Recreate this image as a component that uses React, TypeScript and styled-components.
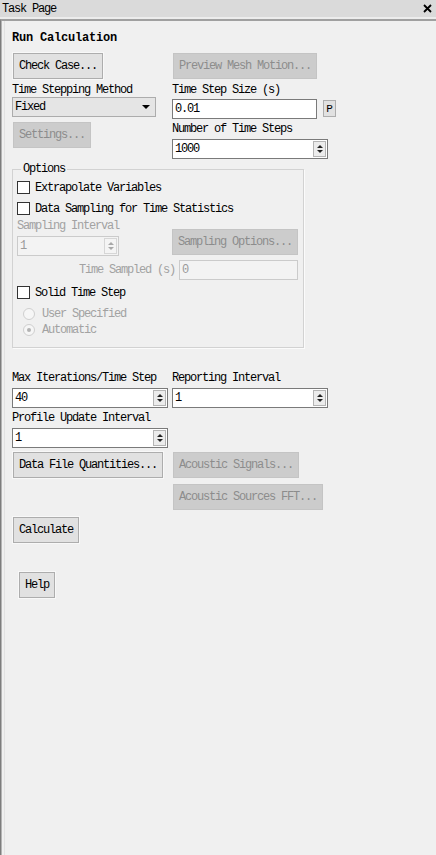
import React from 'react';
import styled, { createGlobalStyle } from 'styled-components';

const GlobalStyle = createGlobalStyle`
  html, body {
    margin: 0;
    padding: 0;
    background: #f0f0f0;
  }
  body {
    font-family: "Liberation Mono", "Noto Sans CJK SC", monospace;
    font-size: 12px;
    letter-spacing: -1.2px;
    color: #000;
  }
  * {
    box-sizing: border-box;
  }
`;

const Window = styled.div`
  width: 436px;
  min-height: 855px;
  background: #f0f0f0;
  display: flex;
  flex-direction: column;
`;

const TitleBar = styled.div`
  height: 17px;
  background: #dadada;
  border-bottom: 2px solid #ececec;
  display: flex;
  align-items: center;
  justify-content: space-between;
  padding: 0 4px 0 2px;
  line-height: 14px;
  box-sizing: content-box;
`;

const Frame = styled.div`
  flex: 1;
  border-top: 2px solid #a0a0a0;
  border-left: 1px solid #7d7d7d;
  box-shadow: inset 1px 0 #b4b4b4;
  padding-left: 3px;
  display: flex;
`;

const Inner = styled.div`
  flex: 1;
  border-left: 1px solid #e2e2e2;
  padding: 10px 0 0 7px;
  display: flex;
  flex-direction: column;
  align-items: flex-start;
`;

const Heading = styled.div`
  font-weight: bold;
  letter-spacing: -0.2px;
  line-height: 14px;
`;

const Row = styled.div<{ $mt?: number; $indent?: number }>`
  display: flex;
  align-items: flex-start;
  margin-top: ${p => p.$mt ?? 0}px;
  margin-left: ${p => p.$indent ?? 0}px;
`;

const Column = styled.div<{ $width?: number }>`
  display: flex;
  flex-direction: column;
  align-items: flex-start;
  width: ${p => (p.$width ? `${p.$width}px` : 'auto')};
`;

const Label = styled.div<{ $mt?: number; $disabled?: boolean }>`
  line-height: 14px;
  white-space: nowrap;
  margin-top: ${p => p.$mt ?? 0}px;
  color: ${p => (p.$disabled ? '#a2a2a2' : '#000')};
`;

const Button = styled.button<{ $mt?: number; $indent?: number }>`
  height: 26px;
  margin: ${p => p.$mt ?? 0}px 0 0 ${p => 1 + (p.$indent ?? 0)}px;
  padding: 0 5px;
  border: 1px solid #adadad;
  background: #e1e1e1;
  color: #000;
  font: inherit;
  letter-spacing: inherit;
  line-height: 14px;
  text-align: left;
  white-space: nowrap;
  box-shadow: 0 0 0 1px #f8f8f8;
  cursor: default;

  &:disabled {
    background: #cccccc;
    border-color: #c4c4c4;
    color: #8c8c8c;
    box-shadow: none;
  }
`;

const Select = styled.div`
  width: 144px;
  height: 20px;
  border: 1px solid #acacac;
  background: #e5e5e5;
  display: flex;
  align-items: center;
  justify-content: space-between;
  padding: 0 5px 0 2px;
`;

const Arrow = styled.span`
  width: 0;
  height: 0;
  border-left: 4px solid transparent;
  border-right: 4px solid transparent;
  border-top: 4px solid #000;
`;

const TextField = styled.input<{ $width: number; $disabled?: boolean }>`
  width: ${p => p.$width}px;
  height: 20px;
  margin: 0;
  padding: 0 2px;
  border: 1px solid ${p => (p.$disabled ? '#cbcbcb' : '#7a7a7a')};
  background: ${p => (p.$disabled ? '#f3f3f3' : '#fff')};
  color: ${p => (p.$disabled ? '#9a9a9a' : '#000')};
  font: inherit;
  letter-spacing: inherit;
  outline: none;
`;

const SmallButton = styled.div`
  width: 13px;
  height: 17px;
  margin-left: 6px;
  margin-top: 1px;
  border: 1px solid #adadad;
  background: #e1e1e1;
  display: flex;
  align-items: center;
  justify-content: center;
  font-size: 11px;
  letter-spacing: 0;
`;

const SpinBox = styled.div<{ $width: number; $disabled?: boolean }>`
  width: ${p => p.$width}px;
  height: 20px;
  border: 1px solid ${p => (p.$disabled ? '#cbcbcb' : '#7a7a7a')};
  background: ${p => (p.$disabled ? '#f3f3f3' : '#fff')};
  color: ${p => (p.$disabled ? '#9a9a9a' : '#000')};
  display: flex;
  align-items: center;
  padding: 0 1px 0 2px;
`;

const SpinValue = styled.span`
  flex: 1;
  line-height: 14px;
`;

const SpinButtons = styled.div<{ $disabled?: boolean }>`
  width: 13px;
  height: 16px;
  border: 1px solid ${p => (p.$disabled ? '#d6d6d6' : '#b4b4b4')};
  background: ${p => (p.$disabled ? '#f4f4f4' : '#ececec')};
  display: flex;
  flex-direction: column;
  align-items: center;
  justify-content: center;
  gap: 2px;
  --tri: ${p => (p.$disabled ? '#a8a8a8' : '#222')};
`;

const TriUp = styled.span`
  width: 0;
  height: 0;
  border-left: 3px solid transparent;
  border-right: 3px solid transparent;
  border-bottom: 3px solid var(--tri);
`;

const TriDown = styled(TriUp)`
  border-bottom: none;
  border-top: 3px solid var(--tri);
`;

const Group = styled.fieldset`
  width: 292px;
  margin: 3px 0 0;
  padding: 1px 4px 9px;
  border: 1px solid #d2d2d2;
  box-shadow: 1px 1px 0 #fbfbfb;
  display: flex;
  flex-direction: column;
  align-items: flex-start;
`;

const Legend = styled.legend`
  margin-left: 4px;
  padding: 0 2px;
  line-height: 14px;
`;

const CheckRow = styled.label`
  height: 21px;
  display: flex;
  align-items: center;
  gap: 5px;
  white-space: nowrap;
`;

const Box = styled.span`
  width: 13px;
  height: 13px;
  border: 1px solid #333;
  background: #fff;
`;

const RadioRow = styled.label<{ $mt?: number }>`
  height: 16px;
  margin: ${p => p.$mt ?? 0}px 0 0 6px;
  display: flex;
  align-items: center;
  gap: 7px;
  color: #a2a2a2;
  white-space: nowrap;
`;

const Radio = styled.span<{ $checked?: boolean }>`
  width: 12px;
  height: 12px;
  border-radius: 50%;
  border: 1px solid #cfcfcf;
  background: #f6f6f6;
  display: flex;
  align-items: center;
  justify-content: center;

  &::after {
    content: '';
    width: 4px;
    height: 4px;
    border-radius: 50%;
    background: ${p => (p.$checked ? '#b3b3b3' : 'transparent')};
  }
`;

const InlineField = styled.div<{ $mt?: number }>`
  width: 281px;
  margin-top: ${p => p.$mt ?? 0}px;
  display: flex;
  align-items: center;
  justify-content: flex-end;
  gap: 4px;
`;

function Spin({ value, width, disabled }: { value: string; width: number; disabled?: boolean }) {
  return (
    <SpinBox $width={width} $disabled={disabled}>
      <SpinValue>{value}</SpinValue>
      <SpinButtons $disabled={disabled}>
        <TriUp />
        <TriDown />
      </SpinButtons>
    </SpinBox>
  );
}

function Check({ label }: { label: string }) {
  return (
    <CheckRow>
      <Box />
      {label}
    </CheckRow>
  );
}

export default function App() {
  return (
    <Window>
      <GlobalStyle />
      <TitleBar>
        <span>Task Page</span>
        <svg width="9" height="9" viewBox="0 0 9 9">
          <path d="M1 1 L8 8 M8 1 L1 8" stroke="#000" strokeWidth="1.8" />
        </svg>
      </TitleBar>
      <Frame>
        <Inner>
          <Heading>Run Calculation</Heading>

          <Row $mt={8}>
            <Column $width={160}>
              <Button>Check Case...</Button>
              <Label $mt={4}>Time Stepping Method</Label>
              <Select>
                <span>Fixed</span>
                <Arrow />
              </Select>
              <Button disabled $mt={5}>Settings...</Button>
            </Column>
            <Column>
              <Button disabled>Preview Mesh Motion...</Button>
              <Label $mt={4}>Time Step Size (s)</Label>
              <Row $mt={2}>
                <TextField $width={145} defaultValue="0.01" />
                <SmallButton>P</SmallButton>
              </Row>
              <Label $mt={3}>Number of Time Steps</Label>
              <Row $mt={3}>
                <Spin value="1000" width={156} />
              </Row>
            </Column>
          </Row>

          <Group>
            <Legend>Options</Legend>
            <Check label="Extrapolate Variables" />
            <Check label="Data Sampling for Time Statistics" />
            <Row>
              <Column $width={155}>
                <Label $disabled>Sampling Interval</Label>
                <Row $mt={3}>
                  <Spin value="1" width={102} disabled />
                </Row>
              </Column>
              <Button disabled $mt={10} $indent={-1}>Sampling Options...</Button>
            </Row>
            <InlineField $mt={4}>
              <Label $disabled>Time Sampled (s)</Label>
              <TextField $width={119} $disabled disabled defaultValue="0" />
            </InlineField>
            <Row $mt={2}>
              <Check label="Solid Time Step" />
            </Row>
            <RadioRow $mt={3}>
              <Radio />
              User Specified
            </RadioRow>
            <RadioRow>
              <Radio $checked />
              Automatic
            </RadioRow>
          </Group>

          <Row $mt={23}>
            <Column $width={160}>
              <Label>Max Iterations/Time Step</Label>
              <Row $mt={3}>
                <Spin value="40" width={156} />
              </Row>
            </Column>
            <Column>
              <Label>Reporting Interval</Label>
              <Row $mt={3}>
                <Spin value="1" width={156} />
              </Row>
            </Column>
          </Row>
          <Label $mt={3}>Profile Update Interval</Label>
          <Row $mt={3}>
            <Spin value="1" width={156} />
          </Row>

          <Row $mt={4}>
            <Column $width={160}>
              <Button>Data File Quantities...</Button>
            </Column>
            <Button disabled>Acoustic Signals...</Button>
          </Row>
          <Row $mt={6} $indent={160}>
            <Button disabled>Acoustic Sources FFT...</Button>
          </Row>
          <Button $mt={7}>Calculate</Button>
          <Button $mt={29} $indent={6}>Help</Button>
        </Inner>
      </Frame>
    </Window>
  );
}
